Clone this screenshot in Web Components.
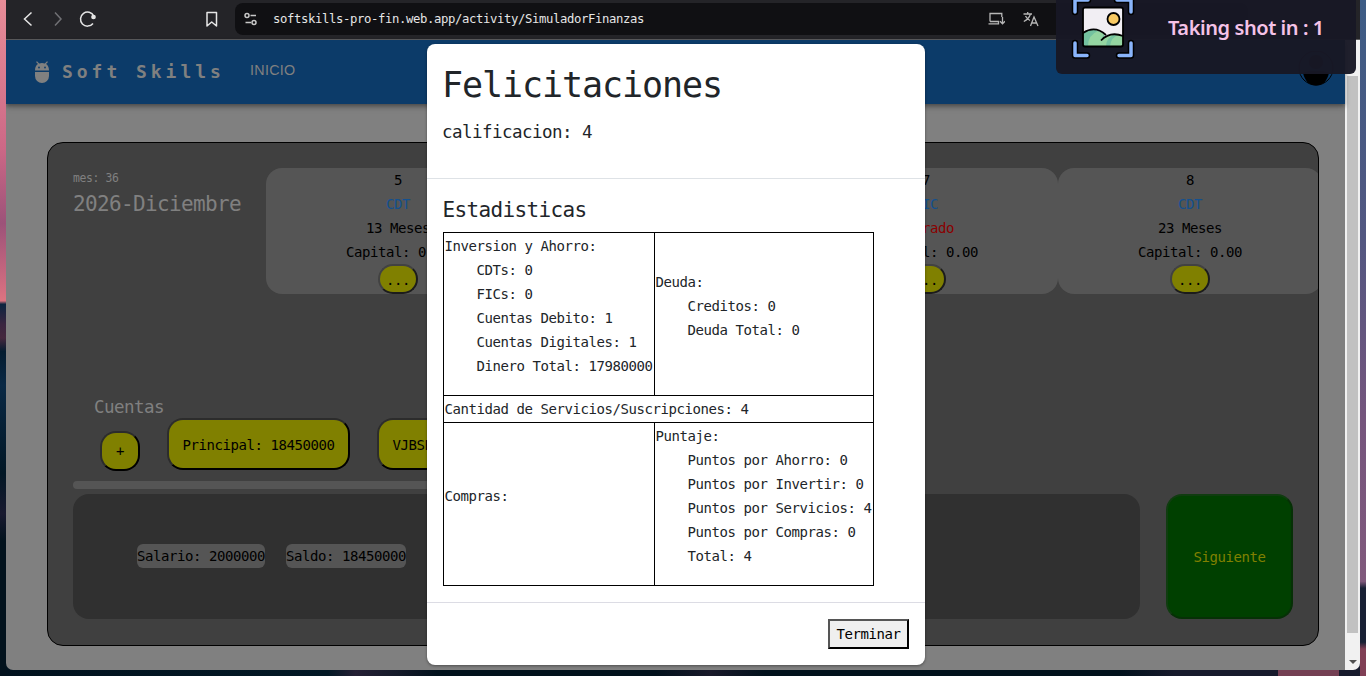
<!DOCTYPE html>
<html lang="es">
<head>
<meta charset="utf-8">
<title>Soft Skills</title>
<style>
html,body{margin:0;height:100%;overflow:hidden}
body{font-family:"DejaVu Sans Mono","Liberation Mono",monospace;font-size:14px;line-height:24px}
</style>
</head>
<body>
<desktop-shell></desktop-shell>
<script>
const reset = `*{box-sizing:border-box;letter-spacing:-.0306em}h1,h2,p,ul{margin:0;padding:0;font-weight:400}button{font:inherit;color:#000;padding:0}`;
function define(name, css, html) {
  customElements.define(name, class extends HTMLElement {
    constructor() {
      super();
      const t = document.createElement('template');
      t.innerHTML = `<style>${reset}${css}</style>${html}`;
      this.attachShadow({mode: 'open'}).append(t.content.cloneNode(true));
    }
  });
}

define('browser-bar', `
:host{display:flex;height:40px;flex:none;background:#242428;border-bottom:1px solid #5c5c5e;color:#e6e6e6}
svg{display:block;fill:none;stroke:currentColor;stroke-width:1.5}
.nav{width:229px;flex:none;display:grid;grid-template-columns:32px 30px 124px 43px;align-items:center;height:39px}
.url{flex:1;height:32px;margin:3px 112px 0 0;background:#101013;border-radius:8px;display:flex;align-items:center;padding-left:9px;font-size:12.25px}
.url span{margin:0 344px 0 15px;width:371px;white-space:nowrap}
.url svg + svg{margin-left:18px}
`, `
<div class="nav">
<svg width="30" height="39"><path d="M25.500 12.500l-7 6.500 7 6.500"/></svg>
<svg width="30" height="39" style="color:#707074"><path d="M17 12.500l6 6.500-6 6.500"/></svg>
<svg width="40" height="39"><path d="M25 23.500a7 7 0 1 1 .8-7.500"/><circle cx="25.500" cy="17" r="1.600" fill="currentColor"/></svg>
<svg width="30" height="39"><path d="M15 12.500h9.500v13.500l-4.800-4-4.700 4z" stroke-linejoin="round"/></svg>
</div>
<div class="url">
<svg width="14" height="14" style="color:#c8c8c8"><circle cx="3" cy="3.500" r="2"/><path d="M6.500 3.500H12M1.500 10.500H7"/><circle cx="10" cy="10.500" r="2"/></svg>
<span>softskills-pro-fin.web.app/activity/SimuladorFinanzas</span>
<svg width="17" height="14" style="color:#b6b6b6;stroke-width:1.300"><path d="M13.800 5V1.500H2V9.500M.5 11.800h10V9.500H2M14.500 5v6.500M12 9.300l2.500 2.500L17 9.300"/></svg>
<svg width="17" height="16" style="color:#b6b6b6;stroke-width:1.300"><path d="M.5 3h8.500M4.700 1v2M7.500 3C6.500 6 4 9 .8 10.500M2.500 5C3.500 7 5 8.500 7 9.500M7.500 15l3.500-9 4 9M8.700 12h5"/></svg>
</div>`);

define('app-bar', `
:host{display:flex;height:64px;flex:none;background:#0c3b69;color:#808080;align-items:center;padding-left:28px;box-shadow:0 2px 4px #0005,0 4px 6px #0002;position:relative}
.bug{fill:#808080;flex:none}
.brand{font-size:18px;font-weight:700;width:188px;flex:none;margin-left:12px;white-space:pre;letter-spacing:3.960px}
a{font:14.300px "Liberation Sans",Arial,sans-serif;letter-spacing:.3px;margin-top:-4px}
.avatar{margin:-4px 10px 0 auto}
`, `
<svg class="bug" width="16" height="22" viewBox="0 0 16 22"><path d="M1 9.500C1 6 2.500 3.700 4 3L2 1 3 .3 5.200 2.500Q8 1.500 10.800 2.500L13 .3l1 .7L12 3c1.500.7 3 3 3 6.500zM1 11h14v4a7 7 0 0 1-14 0z"/><circle cx="5" cy="6.500" r=".9" fill="#0c3b69"/><circle cx="11" cy="6.500" r=".9" fill="#0c3b69"/></svg>
<span class="brand">Soft Skills</span><a>INICIO</a>
<svg class="avatar" width="38" height="38" viewBox="0 0 38 38"><circle cx="19" cy="17" r="17" fill="none" stroke="#000" stroke-width="1"/><circle cx="19" cy="11" r="7"/><path d="M6 22Q9 20 19 20T32 22Q29 34.500 19 34.500T6 22z"/></svg>`);

define('investment-card', `
:host{display:block;flex:none;width:264px;height:126px;border-radius:16px;background:#555;color:#000;text-align:center}
.kind{color:#13508f}
button{display:block;margin:0 auto;width:40px;height:30px;border-radius:16px;background:#808000;border:2px solid;border-color:#424242 #1c1c1c #1c1c1c #424242;padding-top:1px}
`, `<div><slot name="id"></slot></div><div class="kind"><slot name="kind"></slot></div><div><slot name="term"></slot></div><div><slot></slot></div><button>...</button>`);

define('account-button', `
:host{display:block;flex:none}
button{display:block;height:var(--h,52px);width:var(--w,183px);border-radius:16px;background:#808000;border:2px solid;border-color:#2c2c2c #000 #000 #2c2c2c;white-space:nowrap;padding-top:var(--nudge,2px)}
`, `<button><slot></slot></button>`);

define('game-board', `
:host{display:flex;flex-direction:column;width:1272px;height:504px;margin:38px 0 0 41px;background:#404040;border:1px solid #000;border-radius:16px;padding:25px 0 0 25px;overflow:hidden;color:#000;white-space:nowrap}
.top{display:flex;height:226px}
.date{width:193px;flex:none;color:#808080}
.date p{font-size:11.400px;line-height:21px}
.date h2{font-size:21px;line-height:30px}
.title{font-size:17.500px;color:#808080;margin-left:21px;height:24px;padding-top:1px}
.accounts{display:flex;align-items:flex-start;height:63px;padding-left:27px}
.plus{--w:40px;--h:40px;--nudge:0px;margin:13px 27px 0 0}
.plus + *{margin-right:27px}
.bar{height:8px;width:700px;border-radius:4px;background:#555}
.bottom{display:flex;gap:26px;margin-top:5px}
.info{width:1067px;height:125px;border-radius:16px;background:#303030;display:flex;align-items:center;gap:21px;padding:0 0 2px 64px}
.info span{background:#555;border-radius:6px;height:24px;width:128px}
.info span + span{width:120px}
.next{width:127px;height:125px;border-radius:16px;background:#004000;color:#808000;border:2px solid;border-color:#103c10 #063006 #063006 #103c10}
.closed{color:#8b0000}
`, `
<div class="top"><div class="date"><p>mes: 36</p><h2>2026-Diciembre</h2></div>
<investment-card><span slot="id">5</span><span slot="kind">CDT</span><span slot="term">13 Meses</span>Capital: 0.00</investment-card>
<investment-card></investment-card>
<investment-card><span slot="id">7</span><span slot="kind">FIC</span><span slot="term" class="closed">Cerrado</span>Capital: 0.00</investment-card>
<investment-card><span slot="id">8</span><span slot="kind">CDT</span><span slot="term">23 Meses</span>Capital: 0.00</investment-card></div>
<div class="title">Cuentas</div>
<div class="accounts"><account-button class="plus">+</account-button><account-button>Principal: 18450000</account-button><account-button>VJBSE: 180000000000</account-button></div>
<div class="bar"></div>
<div class="bottom"><div class="info"><span>Salario: 2000000</span><span>Saldo: 18450000</span></div><button class="next">Siguiente</button></div>`);

define('page-scrollbar', `
:host{display:flex;flex-direction:column;width:15px;flex:none;background:#f1f1f1;align-items:center}
i{width:11px;height:557px;background:#c1c1c1;margin:36px 0 26px}
`, `<i></i><svg width="9" height="6"><path d="M1 1h8L5 5z" fill="#505050"/></svg>`);

define('stat-list', `
:host{display:block;margin-bottom:16px}
ul{list-style:none;padding-left:32px}
`, `<slot name="title"></slot><ul><slot></slot></ul>`);

define('result-dialog', `
:host{display:flex;flex-direction:column;position:absolute;left:427px;top:44px;width:498px;height:621px;background:#fff;border-radius:8px;color:#212529;box-shadow:0 1px 3px #0006}
header{height:135px;border-bottom:1px solid #dee2e6;padding:17px 16px 0 15px;flex:none}
h1{font-size:35px;line-height:49px}
p{font-size:17.500px;line-height:24px;margin-top:10px}
main{height:424px;padding:17px 16px 0;border-bottom:1px solid #dcdce4;flex:none}
h2{font-size:21px;line-height:28px;margin:0 0 8px -.5px}
table{border-collapse:collapse;width:430px;table-layout:fixed;white-space:nowrap}
td{border:1px solid #000;padding:1px 0 1px .4px;vertical-align:middle}
.one{height:24px}
footer{display:flex;justify-content:flex-end;padding:16px}
button{width:81px;height:30px;border:2px solid;border-color:#555 #000 #000 #555;background:#efefef}
`, `
<header><h1>Felicitaciones</h1><p>calificacion: 4</p></header>
<main><h2>Estadisticas</h2>
<table><colgroup><col style="width:211px"><col style="width:219px"></colgroup>
<tr><td><stat-list><span slot="title">Inversion y Ahorro:</span><div>CDTs: 0</div><div>FICs: 0</div><div>Cuentas Debito: 1</div><div>Cuentas Digitales: 1</div><div>Dinero Total: 17980000</div></stat-list></td>
<td><stat-list><span slot="title">Deuda:</span><div>Creditos: 0</div><div>Deuda Total: 0</div></stat-list></td></tr>
<tr><td colspan="2"><div class="one">Cantidad de Servicios/Suscripciones: 4</div></td></tr>
<tr><td><stat-list><span slot="title">Compras:</span></stat-list></td>
<td><stat-list><span slot="title">Puntaje:</span><div>Puntos por Ahorro: 0</div><div>Puntos por Invertir: 0</div><div>Puntos por Servicios: 4</div><div>Puntos por Compras: 0</div><div>Total: 4</div></stat-list></td></tr></table></main>
<footer><button>Terminar</button></footer>`);

define('shot-toast', `
:host{display:flex;position:absolute;right:10px;top:0;width:300px;height:74px;background:#181825f7;border-radius:0 0 6px 6px;color:#f5c2e7}
svg{flex:none;margin-left:15px}
span{font:600 20px/30px "Noto Sans",sans-serif;letter-spacing:-.42px;white-space:nowrap;margin:13px 0 0 33px}
`, `
<svg width="64" height="60" viewBox="0 0 64 60">
<g fill="none" stroke-linecap="round" stroke-linejoin="round"><path d="M4 12V0H17M46 0H60V12M4 43V55.500H16M48 55.500H60V43" stroke="#000" stroke-width="6.500"/><path d="M4 12V0H17M46 0H60V12M4 43V55.500H16M48 55.500H60V43" stroke="#89b4fa" stroke-width="3.500"/></g>
<rect x="12" y="7.500" width="40" height="39" rx="2" fill="#f1eef3"/>
<path d="M12 33Q22 26 33 34L36 46.500H12z" fill="#74c2a0"/><path d="M17 46Q17 35 27 31L33 34Q30 38 30 46z" fill="#94d5a1"/>
<path d="M30 41Q40 30 52 36V46.500H30z" fill="#94d5a1"/><path d="M35 46Q35 38 44 34L49 34Q40 37 39 46z" fill="#74c2a0"/>
<path d="M12 33Q24 25 35 35M30 40.500Q39 31 52 36" fill="none" stroke="#000" stroke-width="1.800"/>
<rect x="12" y="7.500" width="40" height="39" rx="2" fill="none" stroke="#000" stroke-width="1.800"/>
<circle cx="42.500" cy="19" r="6" fill="#f9ca63" stroke="#000" stroke-width="1.800"/></svg>
<span>Taking shot in : 1</span>`);

define('desktop-shell', `
:host{display:block;position:relative;width:1366px;height:676px;overflow:hidden;
background:
linear-gradient(90deg,#743f53,#743f53) 1278px 670px/61px 6px no-repeat,
linear-gradient(#3d5c85,#525781 35%,#75557d 62%,#80597c 86%,#182034 87%,#182034 95%,#803f55 96%) 1360px 0/6px 676px no-repeat,
linear-gradient(#e88d98,#cc6886 22%,#9c5279 33%,#d46e80 43%,#dc7480 44.500%,#0c2440 45%,#3a2540 48%,#46283e 50%,#041c30 52%,#0a2945 57%,#021725 70%,#191a30 76%,#02121d 80%) 0 0/6px 676px no-repeat,
linear-gradient(90deg,#01121e,#021825 24%,#241f34 26%,#151a2a 29%,#01111c 32%,#01111c 48%,#19192a 52%,#01111c 56%,#01111c 82%,#171a2c 86%,#171a2c)}
.window{display:flex;flex-direction:column;width:1354px;height:670px;margin-left:6px;border-radius:0 0 7px 7px;overflow:hidden}
.page{display:flex;flex:1}
.content{width:1339px;background:#808080}
`, `
<div class="window"><browser-bar></browser-bar><div class="page"><div class="content"><app-bar></app-bar><game-board></game-board></div><page-scrollbar></page-scrollbar></div></div>
<result-dialog></result-dialog><shot-toast></shot-toast>`);
</script>
</body>
</html>
